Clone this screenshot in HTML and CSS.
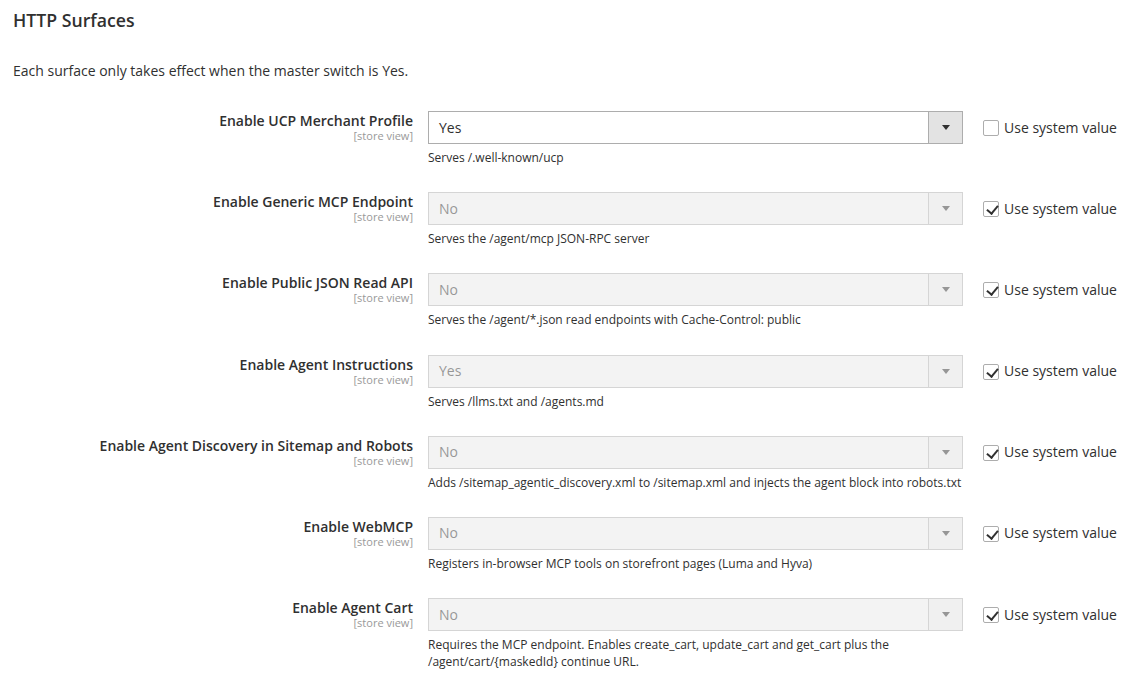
FILE: index.html
```html
<!DOCTYPE html>
<html>
<head>
<meta charset="utf-8">
<link rel="stylesheet" href="styles.css">
</head>
<body>
<div class="section">
  <h2 class="title">HTTP Surfaces</h2>
  <p class="desc">Each surface only takes effect when the master switch is Yes.</p>
  <div class="rows">
    <div class="row">
      <div class="label"><span class="name">Enable UCP Merchant Profile</span><span class="scope">[store view]</span></div>
      <div class="control">
        <div class="select"><span class="value">Yes</span><span class="arrow"></span></div>
        <div class="note">Serves /.well-known/ucp</div>
      </div>
      <div class="inherit"><span class="box"></span><span>Use system value</span></div>
    </div>
    <div class="row">
      <div class="label"><span class="name">Enable Generic MCP Endpoint</span><span class="scope">[store view]</span></div>
      <div class="control">
        <div class="select disabled"><span class="value">No</span><span class="arrow"></span></div>
        <div class="note">Serves the /agent/mcp JSON-RPC server</div>
      </div>
      <div class="inherit"><span class="box checked"></span><span>Use system value</span></div>
    </div>
    <div class="row">
      <div class="label"><span class="name">Enable Public JSON Read API</span><span class="scope">[store view]</span></div>
      <div class="control">
        <div class="select disabled"><span class="value">No</span><span class="arrow"></span></div>
        <div class="note">Serves the /agent/*.json read endpoints with Cache-Control: public</div>
      </div>
      <div class="inherit"><span class="box checked"></span><span>Use system value</span></div>
    </div>
    <div class="row">
      <div class="label"><span class="name">Enable Agent Instructions</span><span class="scope">[store view]</span></div>
      <div class="control">
        <div class="select disabled"><span class="value">Yes</span><span class="arrow"></span></div>
        <div class="note">Serves /llms.txt and /agents.md</div>
      </div>
      <div class="inherit"><span class="box checked"></span><span>Use system value</span></div>
    </div>
    <div class="row">
      <div class="label"><span class="name">Enable Agent Discovery in Sitemap and Robots</span><span class="scope">[store view]</span></div>
      <div class="control">
        <div class="select disabled"><span class="value">No</span><span class="arrow"></span></div>
        <div class="note">Adds /sitemap_agentic_discovery.xml to /sitemap.xml and injects the agent block into robots.txt</div>
      </div>
      <div class="inherit"><span class="box checked"></span><span>Use system value</span></div>
    </div>
    <div class="row">
      <div class="label"><span class="name">Enable WebMCP</span><span class="scope">[store view]</span></div>
      <div class="control">
        <div class="select disabled"><span class="value">No</span><span class="arrow"></span></div>
        <div class="note">Registers in-browser MCP tools on storefront pages (Luma and Hyva)</div>
      </div>
      <div class="inherit"><span class="box checked"></span><span>Use system value</span></div>
    </div>
    <div class="row">
      <div class="label"><span class="name">Enable Agent Cart</span><span class="scope">[store view]</span></div>
      <div class="control">
        <div class="select disabled"><span class="value">No</span><span class="arrow"></span></div>
        <div class="note">Requires the MCP endpoint. Enables create_cart, update_cart and get_cart plus the /agent/cart/{maskedId} continue URL.</div>
      </div>
      <div class="inherit"><span class="box checked"></span><span>Use system value</span></div>
    </div>
  </div>
</div>
</body>
</html>
```
FILE: styles.css
```css
* { box-sizing: border-box; }
html, body {
  margin: 0;
  padding: 0;
  background: #ffffff;
  font-family: "Open Sans", "Noto Sans", sans-serif;
  color: #303030;
}
.section {
  padding: 10px 0 0 13px;
}
.title {
  margin: 0;
  font-size: 17.7px;
  line-height: 20px;
  font-weight: 600;
  color: #303030;
}
.desc {
  margin: 31px 0 0;
  font-size: 14px;
  line-height: 20px;
}
.rows {
  margin-top: 30px;
  display: flex;
  flex-direction: column;
  gap: 26.2px;
}
.row {
  display: flex;
  align-items: flex-start;
}
.label {
  width: 400px;
  display: flex;
  flex-direction: column;
  align-items: flex-end;
  text-align: right;
  padding-top: 1px;
}
.name {
  font-size: 14px;
  line-height: 18px;
  font-weight: 600;
  color: #303030;
}
.scope {
  font-size: 11px;
  line-height: 11px;
  color: #999999;
}
.control {
  width: 535px;
  margin-left: 15px;
}
.select {
  height: 33px;
  border: 1px solid #adadad;
  background: #ffffff;
  display: flex;
  align-items: center;
  position: relative;
}
.select .value {
  flex: 1;
  padding-left: 10px;
  font-size: 14px;
  line-height: 20px;
  color: #303030;
}
.select .arrow {
  width: 34px;
  height: 100%;
  background: #e3e3e3;
  border-left: 1px solid #adadad;
  display: flex;
  align-items: center;
  justify-content: center;
}
.select .arrow::after {
  content: "";
  width: 0;
  height: 0;
  border-style: solid;
  border-width: 5px 4px 0 4px;
  border-color: #303030 transparent transparent transparent;
}
.select.disabled {
  opacity: 0.5;
  background: #e9e9e9;
}
.note {
  margin-top: 5px;
  margin-right: -12px;
  font-size: 12px;
  line-height: 17px;
  color: #303030;
}
.inherit {
  margin-left: 20px;
  height: 33px;
  display: flex;
  align-items: center;
  gap: 5px;
  font-size: 14px;
  line-height: 20px;
  color: #303030;
}
.box {
  width: 16px;
  height: 16px;
  border: 1px solid #adadad;
  border-radius: 2px;
  background: #ffffff;
  position: relative;
  margin-top: 1px;
}
.box.checked::after {
  content: "";
  position: absolute;
  left: 4.5px;
  top: 1px;
  width: 5px;
  height: 9px;
  border-right: 2.6px solid #303030;
  border-bottom: 2.6px solid #303030;
  transform: rotate(40deg);
}
```
